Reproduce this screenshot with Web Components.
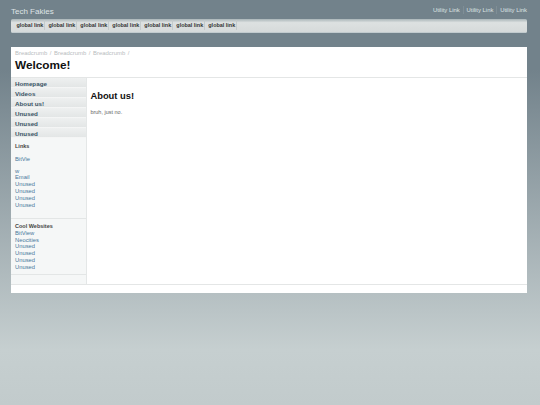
<!DOCTYPE html>
<html><head><meta charset="utf-8"><style>
html{height:100%}
body{margin:0;height:405px;overflow:hidden;background:linear-gradient(#72828b 0,#72828b 70px,#c6cfd0 350px,#c2cbcc 405px);font-family:"Liberation Sans",Arial,sans-serif}
</style></head><body>
<site-page></site-page>
<script>
function def(name,css,html){
  customElements.define(name,class extends HTMLElement{
    constructor(){super();this.attachShadow({mode:'open'}).innerHTML='<style>'+css+'</style>'+html;}
  });
}
def('site-header',`:host{display:block;height:19px}
.r{display:flex;justify-content:space-between;align-items:flex-start}
.t{font-size:8px;color:#dfe4e6;padding-top:7px;line-height:9px}
.u{display:flex;font-size:5.9px;color:#dde2e4;padding-top:6px;line-height:8px}
.u span+span{margin-left:3px;padding-left:2.8px;border-left:1px solid #7f8e96}`,
`<div class="r"><div class="t">Tech Fakies</div><div class="u"><span>Utility Link</span><span>Utility Link</span><span>Utility Link</span></div></div>`);
def('global-nav',`:host{display:flex;height:14px;box-sizing:border-box;border-radius:1.5px;background:linear-gradient(#a9b5b8,#dde1e1 28%,#d6dada);border-bottom:1px solid #c2cbce;padding:1px 0 0 2px;margin-bottom:14px}
span{font:bold 5.45px/11px "Liberation Sans",sans-serif;color:#333;padding:0 1.6px 0 3.4px;height:10px;border-right:1px solid #c4cbcc;width:26px;white-space:nowrap;flex:none;box-sizing:content-box}`,
`<span>global link</span><span>global link</span><span>global link</span><span>global link</span><span>global link</span><span>global link</span><span>global link</span>`);
def('page-title',`:host{display:block;height:31px;box-sizing:border-box;border-bottom:1px solid #e4e6e6;padding:3px 4px 0}
.b{font-size:5.95px;line-height:6px;color:#b8bcbe;word-spacing:.85px}
.w{font:bold 11.8px/14px "Liberation Sans",sans-serif;color:#111;margin-top:2px}`,
`<div class="b">Breadcrumb / Breadcrumb / Breadcrumb /</div><div class="w">Welcome!</div>`);
def('nav-item',`:host{display:block;height:10px;box-sizing:border-box;background:linear-gradient(#eef0f0,#e3e6e6);border-bottom:1px solid #f4f5f5;padding-left:4px;font:bold 6.25px/11px "Liberation Sans",sans-serif;color:#3a5566}`,`<slot></slot>`);
def('side-box',`:host{display:block;box-sizing:border-box;padding:0 4px;border-bottom:1px solid #e3e6e6;font-size:5.8px;line-height:6.8px;color:#4a789c}
::slotted(b){display:block;color:#444;font-size:5.5px}`,`<slot></slot>`);
def('main-content',`:host{display:block;flex:1;padding:12px 3.4px 0}
h2{margin:0;font:bold 9.4px/11px "Liberation Sans",sans-serif;color:#111}
p{margin:8px 0 0;font-size:5.5px;line-height:7px;color:#666}`,
`<h2>About us!</h2><p>bruh, just no.</p>`);
def('side-bar',`:host{display:block;width:76px;flex:none;box-sizing:border-box;background:#f5f7f7;border-right:1px solid #e4e7e7}`,`<slot></slot>`);
def('site-page',`:host{display:block;padding:0 13px 0 11px;width:516px}
.card{background:#fff;height:246px;display:flex;flex-direction:column}
.m{display:flex;height:206px;border-bottom:1px solid #e4e6e6}
.f{flex:1}`,
`<site-header></site-header><global-nav></global-nav>
<div class="card"><page-title></page-title>
<div class="m"><side-bar>
<nav-item>Homepage</nav-item><nav-item>Videos</nav-item><nav-item>About us!</nav-item><nav-item>Unused</nav-item><nav-item>Unused</nav-item><nav-item>Unused</nav-item>
<side-box style="height:81px;padding-top:5px"><b>Links</b><div style="height:6px"></div><div>BitVie</div><div style="height:5px"></div><div>w</div><div>Email</div><div>Unused</div><div>Unused</div><div>Unused</div><div>Unused</div></side-box>
<side-box style="height:56px;padding-top:4px"><b>Cool Websites</b><div>BitView</div><div>Neocities</div><div>Unused</div><div>Unused</div><div>Unused</div><div>Unused</div></side-box>
</side-bar><main-content></main-content></div>
<div class="f"></div></div>`);
</script></body></html>
